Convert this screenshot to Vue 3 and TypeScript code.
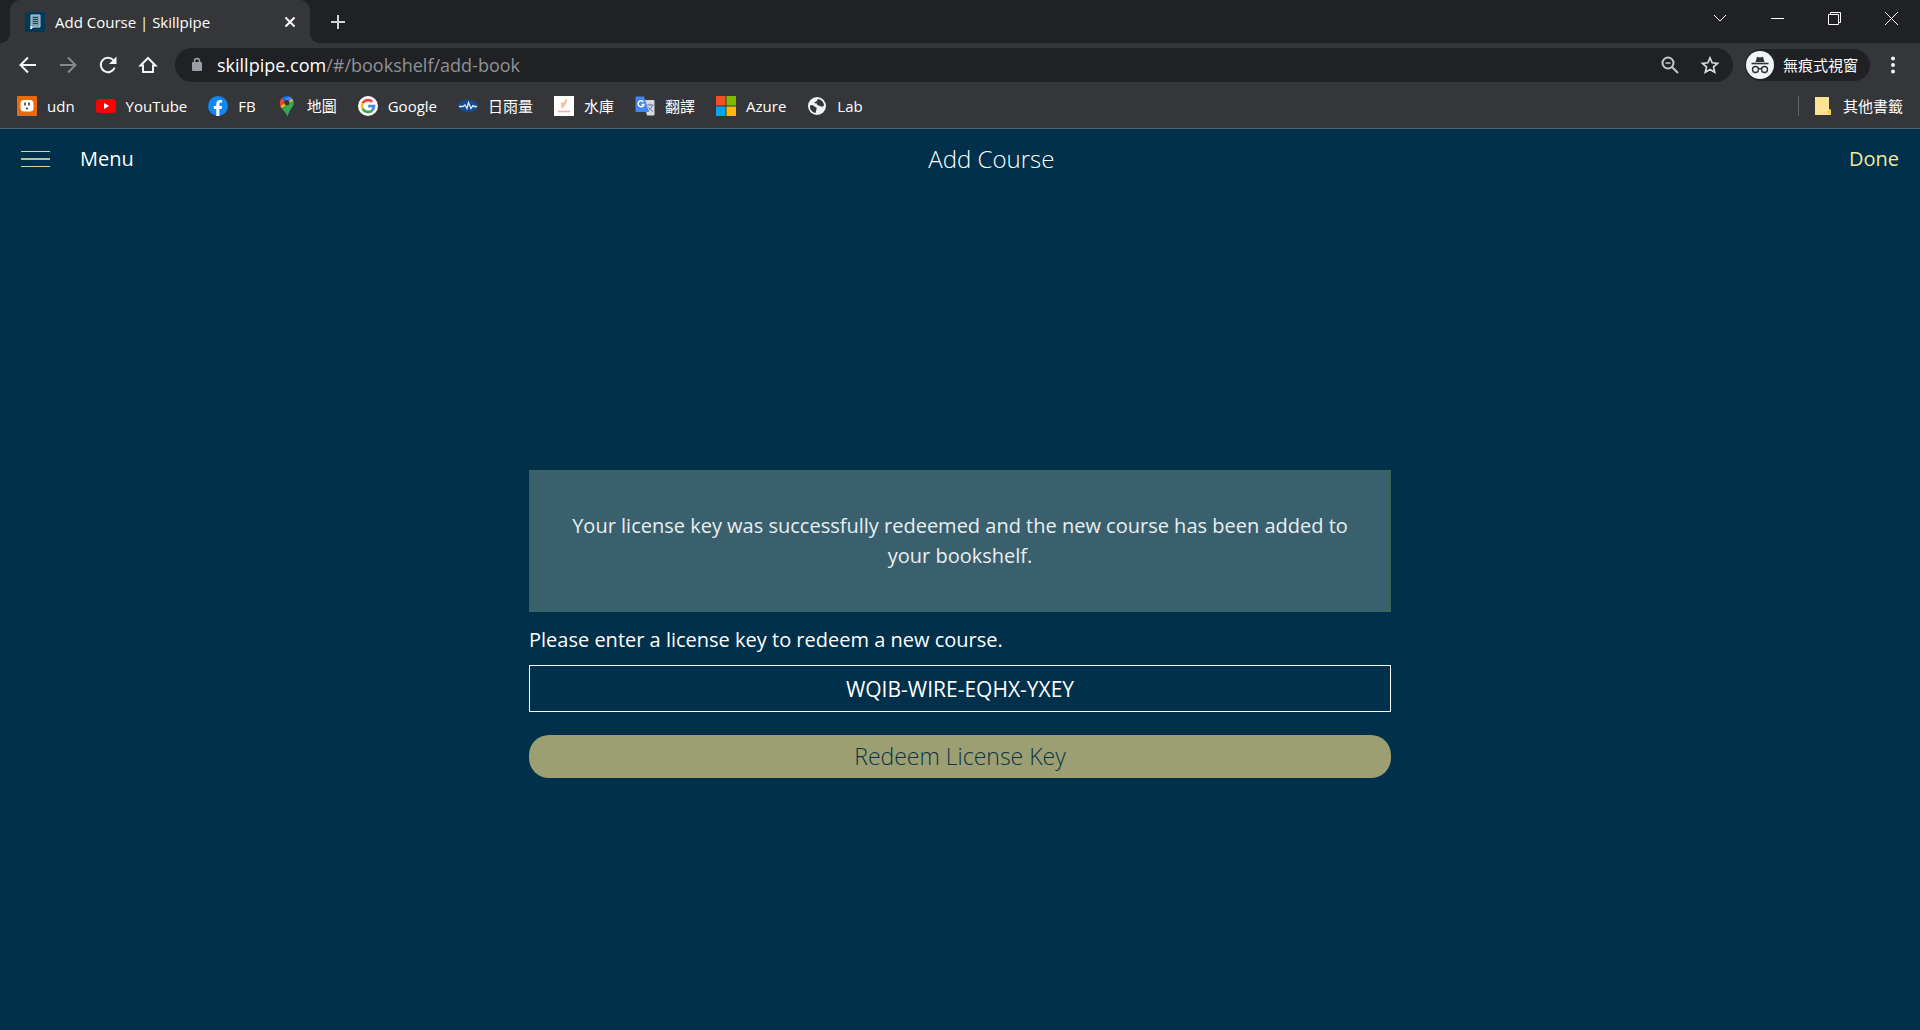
<script setup lang="ts">
import { ref } from 'vue'

interface Bookmark {
  id: string
  label: string
}

const bookmarks: Bookmark[] = [
  { id: 'udn', label: 'udn' },
  { id: 'youtube', label: 'YouTube' },
  { id: 'facebook', label: 'FB' },
  { id: 'maps', label: '地圖' },
  { id: 'google', label: 'Google' },
  { id: 'rain', label: '日雨量' },
  { id: 'reservoir', label: '水庫' },
  { id: 'translate', label: '翻譯' },
  { id: 'azure', label: 'Azure' },
  { id: 'lab', label: 'Lab' },
]

const path = ref('/#/bookshelf/add-book')
const licenseKey = ref('WQIB-WIRE-EQHX-YXEY')
</script>

<template>
  <div class="window">
    <header class="chrome">
      <div class="tabstrip">
        <div class="tab">
          <svg class="favicon" viewBox="0 0 20 20" aria-hidden="true">
            <rect width="20" height="20" fill="#003a58" />
            <path d="M6 3h9v12H8l-2 2z" fill="#7d9caf" stroke="#b9cfdb" />
            <path d="M8 5.500h5M8 7.500h5M8 9.500h5M8 11.500h5" stroke="#1c4a66" />
            <path d="M6 14v3l2-2" fill="none" stroke="#fff" />
          </svg>
          <span class="tab-title">Add Course | Skillpipe</span>
          <button class="tab-close" type="button" aria-label="Close tab">
            <svg viewBox="0 0 20 20"><path d="M5.500 5.500l9 9M14.500 5.500l-9 9" stroke="#fff" stroke-width="2" /></svg>
          </button>
        </div>
        <button class="new-tab" type="button" aria-label="New tab">
          <svg viewBox="0 0 20 20"><path d="M10 3v14M3 10h14" stroke="#d0d2d5" stroke-width="2" /></svg>
        </button>
        <div class="window-controls">
          <button type="button" aria-label="Search tabs">
            <svg viewBox="0 0 20 20"><path d="M4 7l6 6 6-6" /></svg>
          </button>
          <button type="button" aria-label="Minimize">
            <svg viewBox="0 0 20 20"><path d="M4 10.500h13" /></svg>
          </button>
          <button type="button" aria-label="Restore">
            <svg viewBox="0 0 20 20"><path d="M4.500 6.500h10v10h-10zM6.500 6V4.500h10v10H15" /></svg>
          </button>
          <button type="button" aria-label="Close">
            <svg viewBox="0 0 20 20"><path d="M4 4l13 13M17 4L4 17" /></svg>
          </button>
        </div>
      </div>

      <div class="toolbar">
        <nav class="nav-buttons" aria-label="Navigation">
          <button type="button" aria-label="Back">
            <svg viewBox="0 0 20 20"><path d="M18 10H3M10 2.500L2.500 10l7.500 7.500" /></svg>
          </button>
          <button type="button" class="dim" aria-label="Forward">
            <svg viewBox="0 0 20 20"><path d="M2 10h15M10 2.500l7.500 7.500-7.500 7.500" /></svg>
          </button>
          <button type="button" aria-label="Reload">
            <svg viewBox="0 0 20 20">
              <path d="M16.700 12.500A7.200 7.200 0 1 1 15.400 5.200" />
              <path d="M18.500 1.500v7.500H11z" fill="#f1f3f4" stroke="none" />
            </svg>
          </button>
          <button type="button" aria-label="Home">
            <svg viewBox="0 0 20 20"><path d="M2.500 10.500L10 3l7.500 7.500H15V17H5v-6.500z" /></svg>
          </button>
        </nav>

        <div class="omnibox">
          <svg class="lock" viewBox="0 0 12 16" aria-hidden="true">
            <rect x="1" y="5" width="10" height="9" rx="1" fill="#9aa0a6" />
            <path d="M3.500 6V4a2.500 2.500 0 0 1 5 0v2" fill="none" stroke="#9aa0a6" stroke-width="1.500" />
          </svg>
          <label class="host" for="address">skillpipe.com</label>
          <input id="address" v-model="path" class="path" type="text" spellcheck="false" />
          <button type="button" aria-label="Zoom">
            <svg viewBox="0 0 20 20" stroke="#c6c8cb" fill="none" stroke-width="2">
              <circle cx="8" cy="8" r="5.500" /><path d="M12 12l6 6" /><path d="M5.500 8h5" stroke-width="1.500" />
            </svg>
          </button>
          <button type="button" aria-label="Bookmark this page">
            <svg viewBox="0 0 20 20" stroke="#d5d7da" fill="none" stroke-width="1.700">
              <path d="M10 2.800l2.200 5 5.400.5-4.100 3.600 1.200 5.300L10 14.400l-4.700 2.800 1.200-5.300-4.100-3.600 5.400-.5z" />
            </svg>
          </button>
        </div>

        <button class="incognito" type="button">
          <svg viewBox="0 0 28 28" aria-hidden="true">
            <circle cx="14" cy="14" r="14" fill="#f1f3f4" />
            <path d="M9.500 11l1.500-5.200 3 .8 3-.8 1.500 5.200z" fill="#303134" />
            <path d="M5.500 12.500h17" stroke="#303134" stroke-width="1.600" />
            <g fill="none" stroke="#303134" stroke-width="1.400">
              <circle cx="9.500" cy="18.500" r="3" /><circle cx="18.500" cy="18.500" r="3" /><path d="M12.500 18q1.500-1 3 0" />
            </g>
          </svg>
          <span>無痕式視窗</span>
        </button>
        <button class="more" type="button" aria-label="More">
          <svg viewBox="0 0 20 20" fill="#f1f3f4">
            <circle cx="10" cy="3.500" r="2" /><circle cx="10" cy="10" r="2" /><circle cx="10" cy="16.500" r="2" />
          </svg>
        </button>
      </div>

      <nav class="bookmarks" aria-label="Bookmarks">
        <a v-for="b in bookmarks" :key="b.id" class="bookmark" href="#">
          <svg viewBox="0 0 20 20" aria-hidden="true">
            <g v-if="b.id === 'udn'">
              <rect width="20" height="20" rx="1" fill="#ea6a0a" />
              <rect x="3.500" y="4" width="13" height="11.500" rx="3.500" fill="#fff" />
              <path d="M8 6.500v3M12 6.500v3M9 12.500h2" stroke="#333" stroke-width="1.500" />
            </g>
            <g v-else-if="b.id === 'youtube'">
              <rect y="3" width="20" height="14" rx="3.500" fill="#f00" />
              <path d="M8 7l5.200 3L8 13z" fill="#fff" />
            </g>
            <g v-else-if="b.id === 'facebook'">
              <circle cx="10" cy="10" r="10" fill="#1286f3" />
              <path d="M8.300 20v-7H5.800v-3h2.500V7.800c0-2.500 1.400-3.900 3.700-3.900l2.100.2v2.500h-1.200c-1.200 0-1.500.7-1.500 1.500V10h2.700l-.5 3h-2.200v7z" fill="#fff" />
            </g>
            <g v-else-if="b.id === 'maps'">
              <path d="M3.500 10.500C2 6.500 3 3.500 5 2l5 5z" fill="#ea4335" />
              <path d="M4.700 2.300C6.300.500 8.800-.300 11.700.500L8 5.500z" fill="#1a73e8" />
              <path d="M11.700.500c2.300.700 3.900 2 4.700 4.200L8 12 6.500 9z" fill="#4285f4" />
              <path d="M16.400 4.600L4.500 12.300l-1-1.800L13 2z" fill="#fbbc04" />
              <path d="M16.400 4.600c1.600 5-2 7.300-4 10.900L10.500 20c-.5 0-.6-.3-1-1.500-.8-2.300-3.200-4-4.700-6.300z" fill="#34a853" />
              <path d="M11 1l-3 2.500L10 7l5.300-4.500C14 1 12.500.4 11 1z" fill="#4285f4" />
              <circle cx="9.800" cy="6.700" r="2.600" fill="#35363a" />
            </g>
            <g v-else-if="b.id === 'google'">
              <circle cx="10" cy="10" r="10" fill="#fff" />
              <g fill="none" stroke-width="2.700">
                <path d="M14.200 5.800A6 6 0 0 0 4.700 7.200" stroke="#ea4335" />
                <path d="M4.700 7.200a6 6 0 0 0 0 5.600" stroke="#fbbc05" />
                <path d="M4.700 12.800a6 6 0 0 0 9.300 1.600" stroke="#34a853" />
                <path d="M14 14.400a6 6 0 0 0 2-4.200h-5.800" stroke="#4285f4" />
              </g>
            </g>
            <g v-else-if="b.id === 'rain'">
              <ellipse cx="10" cy="10" rx="10" ry="6.500" fill="#174b8c" />
              <path d="M1 10.500h4l2-1.500 2 3.500 1.500-6 2.500 6 2-3 1 1h3" fill="none" stroke="#d8edff" stroke-width="1.300" />
            </g>
            <g v-else-if="b.id === 'reservoir'">
              <rect width="20" height="20" fill="#fff" />
              <path d="M12.500 2c1.500 3-1 8-5 11 0-3-1-5 0-7l2 1z" fill="#f8bd92" />
              <path d="M4 15.500h12" stroke="#f7a9a4" stroke-width="1.600" />
            </g>
            <g v-else-if="b.id === 'translate'">
              <path d="M8 4h10.500a1 1 0 0 1 1 1v13.500a1 1 0 0 1-1 1H12z" fill="#d8dadd" />
              <path d="M12 9h6.500M15 7.500V9M17.500 9c-.8 2.800-2.500 4.700-4.500 6M13.500 11c1 2 2.500 3.500 4.500 4.500" fill="none" stroke="#607d8b" />
              <path d="M1.500.500H9L14 16H1.500a1 1 0 0 1-1-1V1.500a1 1 0 0 1 1-1z" fill="#4285f4" />
              <path d="M8.500 6A3 3 0 1 0 9 8.500H6.500" fill="none" stroke="#fff" stroke-width="1.400" />
            </g>
            <g v-else-if="b.id === 'azure'">
              <rect width="9.500" height="9.500" fill="#f25022" />
              <rect x="10.500" width="9.500" height="9.500" fill="#7fba00" />
              <rect y="10.500" width="9.500" height="9.500" fill="#00a4ef" />
              <rect x="10.500" y="10.500" width="9.500" height="9.500" fill="#ffb900" />
            </g>
            <g v-else>
              <circle cx="10" cy="10" r="9" fill="#f1f3f4" />
              <path d="M3 9.500c2.500-.5 4 .2 5 1.500 1.500.2 2 1 1.500 2.300L8.500 17C4.500 16 2.500 13 3 9.500zM10.500 3C14 3 17 6 17 9.500c-1.500 1.800-3.200 1.200-4.500.3-2-.3-3-1.300-2.200-2.300C8.500 7.500 7 7.500 7.500 6c2-.3 3-1.200 3-3z" fill="#35363a" />
            </g>
          </svg>
          <span>{{ b.label }}</span>
        </a>
        <a class="bookmark other" href="#">
          <svg viewBox="0 0 20 20" aria-hidden="true">
            <path d="M2 1h14v12l2 1v5H2z" fill="#fde293" />
            <path d="M14.500 18.500v-4l2-1.500 1.500 1v4.500z" fill="#f5cf57" />
          </svg>
          <span>其他書籤</span>
        </a>
      </nav>
    </header>

    <main class="page">
      <div class="app-bar">
        <button class="menu" type="button">
          <svg viewBox="0 0 29 20" aria-hidden="true">
            <path d="M0 2.500h29M0 17.500h29" stroke="#d9d49a" />
            <path d="M0 10h29" stroke="#b5bfa0" stroke-width="2" />
          </svg>
          <span>Menu</span>
        </button>
        <h1>Add Course</h1>
        <a class="done" href="#">Done</a>
      </div>

      <form class="redeem" @submit.prevent>
        <p class="notice" role="status">
          Your license key was successfully redeemed and the new course has been added to your bookshelf.
        </p>
        <label for="license">Please enter a license key to redeem a new course.</label>
        <input id="license" v-model="licenseKey" type="text" spellcheck="false" />
        <button class="submit" type="submit">Redeem License Key</button>
      </form>
    </main>
  </div>
</template>

<style>
body {
  margin: 0;
  background: #00304a;
}
</style>

<style scoped>
.window {
  min-height: 100vh;
  display: flex;
  flex-direction: column;
  color: #fff;
  font-family: "Open Sans", "Noto Sans CJK TC", sans-serif;
}

button,
input {
  margin: 0;
  padding: 0;
  border: 0;
  background: none;
  color: inherit;
  font: inherit;
  outline: 0;
}

svg {
  display: block;
  flex: none;
  width: 20px;
  height: 20px;
}

a {
  color: inherit;
  text-decoration: none;
}

.chrome {
  background: #35363a;
  border-bottom: 1px solid #4a6478;
  font-size: 15px;
  line-height: 20px;
}

.tabstrip {
  display: flex;
  align-items: flex-start;
  height: 43px;
  padding-left: 10px;
  background: #202124;
}

.tab {
  position: relative;
  box-sizing: border-box;
  display: flex;
  align-items: center;
  gap: 10px;
  width: 300px;
  height: 43px;
  padding: 0 10px 0 15px;
  border-radius: 10px 10px 0 0;
  background: #35363a;
}

.tab::before,
.tab::after {
  content: "";
  position: absolute;
  bottom: 0;
  width: 10px;
  height: 10px;
}

.tab::before {
  right: 100%;
  background: radial-gradient(circle at 0 0, #202124 10px, #35363a 10px);
}

.tab::after {
  left: 100%;
  background: radial-gradient(circle at 100% 0, #202124 10px, #35363a 10px);
}

.tab-title {
  flex: 1;
  white-space: nowrap;
}

.new-tab {
  align-self: center;
  margin-left: 18px;
}

.window-controls {
  display: flex;
  margin-left: auto;
  padding-right: 1px;
}

.window-controls button {
  display: grid;
  place-items: center;
  width: 57px;
  height: 36px;
}

.window-controls svg {
  fill: none;
  stroke: #fff;
}

.toolbar {
  display: flex;
  align-items: center;
  height: 44px;
  padding: 0 17px 0 8px;
}

.nav-buttons {
  display: flex;
  margin-right: 7px;
}

.nav-buttons button {
  display: grid;
  place-items: center;
  width: 40px;
  height: 34px;
}

.nav-buttons svg {
  fill: none;
  stroke: #f1f3f4;
  stroke-width: 2;
}

.nav-buttons .dim svg {
  stroke: #86888b;
}

.omnibox {
  box-sizing: border-box;
  display: flex;
  flex: 1;
  align-items: center;
  height: 34px;
  padding: 0 13px 0 16px;
  border-radius: 17px;
  background: #202124;
  font-size: 18px;
  line-height: 24px;
}

.omnibox .lock {
  width: 12px;
  height: 16px;
  margin-right: 14px;
}

.omnibox .path {
  flex: 1;
  min-width: 0;
  height: 24px;
  color: #8f9296;
}

.omnibox button {
  margin-left: 20px;
}

.incognito {
  display: flex;
  align-items: center;
  gap: 9px;
  height: 32px;
  margin-left: 12px;
  padding: 0 12px 0 1px;
  border-radius: 16px;
  background: #202124;
}

.incognito svg {
  width: 28px;
  height: 28px;
}

.more {
  margin-left: 13px;
}

.bookmarks {
  box-sizing: border-box;
  display: flex;
  align-items: center;
  gap: 21px;
  height: 41px;
  padding: 0 17px 4px;
}

.bookmark {
  display: flex;
  align-items: center;
  gap: 10px;
  white-space: nowrap;
}

.other {
  margin-left: auto;
  padding-left: 14px;
  border-left: 1px solid #5f6368;
}

.page {
  flex: 1;
  background: #00304a;
  font-size: 20px;
  line-height: 30px;
}

.app-bar {
  box-sizing: border-box;
  display: flex;
  align-items: center;
  justify-content: space-between;
  height: 62px;
  padding: 0 21px 2px;
}

.menu {
  display: flex;
  align-items: center;
  gap: 30px;
}

.menu svg {
  width: 29px;
}

h1 {
  margin: 0;
  font-size: 24px;
  font-weight: 300;
}

.done {
  color: #eee8a0;
}

.redeem {
  display: flex;
  flex-direction: column;
  width: 90%;
  max-width: 862px;
  margin: 0 auto;
  padding: 279px 0 40px;
}

.notice {
  margin: 0 0 13px;
  padding: 40px;
  border: 1px solid #34684f;
  background: #3a606e;
  color: #e8eff2;
  text-align: center;
}

#license {
  box-sizing: border-box;
  height: 47px;
  margin: 10px 0 23px;
  border: 1px solid #fff;
  font-size: 21px;
  text-align: center;
}

.submit {
  height: 43px;
  padding-bottom: 2px;
  border-radius: 20px;
  background: #9c9f72;
  color: #0b3445;
  font-size: 23px;
  font-weight: 300;
}
</style>
